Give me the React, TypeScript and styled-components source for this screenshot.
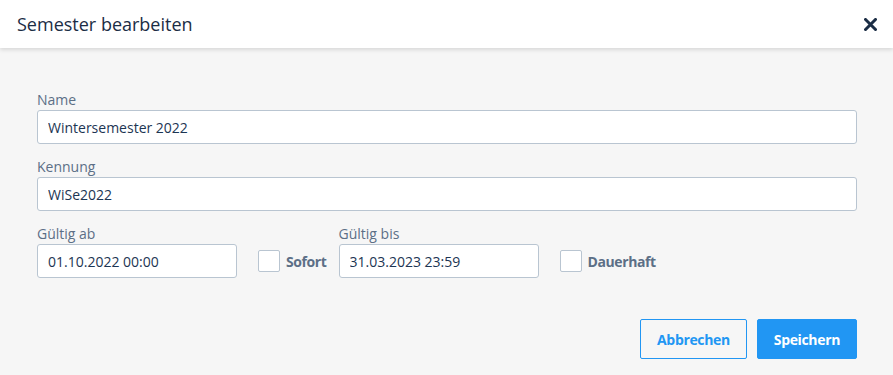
import styled, { createGlobalStyle } from "styled-components";

const GlobalStyle = createGlobalStyle`
  html, body {
    margin: 0;
    padding: 0;
    background: #f6f6f6;
    font-family: "Open Sans", "Noto Sans", sans-serif;
  }
  * { box-sizing: border-box; }
`;

const Modal = styled.div`
  width: 893px;
  height: 375px;
  background: #f6f6f6;
  display: flex;
  flex-direction: column;
`;

const Header = styled.div`
  height: 48px;
  background: #fff;
  display: flex;
  align-items: center;
  justify-content: space-between;
  padding: 0 16px 0 17px;
  box-shadow: 0 2px 4px rgba(0, 0, 0, 0.12);
  position: relative;
  z-index: 1;
`;

const Title = styled.h1`
  margin: 0;
  font-size: 18px;
  font-weight: 400;
  color: #1b2d45;
  line-height: 24px;
`;

const Close = styled.button`
  border: none;
  background: none;
  padding: 0;
  width: 14px;
  height: 14px;
  display: flex;
  align-items: center;
  justify-content: center;
  cursor: pointer;
`;

const Body = styled.div`
  padding: 42px 36px 0 37px;
  display: flex;
  flex-direction: column;
  gap: 13px;
`;

const Field = styled.div<{ width?: number }>`
  display: flex;
  flex-direction: column;
  width: ${p => (p.width ? `${p.width}px` : "auto")};
`;

const Label = styled.label`
  font-size: 14px;
  line-height: 20px;
  color: #5c6f86;
`;

const Input = styled.input`
  height: 34px;
  border: 1px solid #b9c5d1;
  border-radius: 3px;
  background: #fff;
  padding: 0 10px;
  font-family: inherit;
  font-size: 14px;
  color: #1c3553;
  outline: none;
`;

const DateRow = styled.div`
  display: flex;
  align-items: flex-end;
`;

const CheckGroup = styled.label`
  height: 34px;
  display: flex;
  align-items: center;
  margin: 0 12px 0 21px;
  font-size: 14px;
  font-weight: 700;
  letter-spacing: -0.4px;
  color: #5c6f86;
  cursor: pointer;
`;

const Box = styled.span`
  width: 22px;
  height: 22px;
  border: 1px solid #b9c5d1;
  border-radius: 2px;
  background: #fff;
  margin-right: 6px;
`;

const Footer = styled.div`
  display: flex;
  justify-content: flex-end;
  gap: 10px;
  margin-top: 28px;
`;

const Button = styled.button<{ primary?: boolean }>`
  height: 40px;
  padding: 0 16px;
  border-radius: 2px;
  border: 1px solid #2196f3;
  background: ${p => (p.primary ? "#2196f3" : "transparent")};
  color: ${p => (p.primary ? "#fff" : "#2196f3")};
  font-family: inherit;
  font-size: 14px;
  font-weight: 700;
  letter-spacing: -0.35px;
  cursor: pointer;
`;

export default function App() {
  return (
    <>
      <GlobalStyle />
      <Modal>
        <Header>
          <Title>Semester bearbeiten</Title>
          <Close aria-label="Schließen">
            <svg width="13" height="13" viewBox="0 0 13 13">
              <path d="M1.5 1.5 L11.5 11.5 M11.5 1.5 L1.5 11.5" stroke="#1b2d45" strokeWidth="3" strokeLinecap="square" />
            </svg>
          </Close>
        </Header>
        <Body>
          <Field>
            <Label>Name</Label>
            <Input defaultValue="Wintersemester 2022" />
          </Field>
          <Field>
            <Label>Kennung</Label>
            <Input defaultValue="WiSe2022" />
          </Field>
          <DateRow>
            <Field width={200}>
              <Label>Gültig ab</Label>
              <Input defaultValue="01.10.2022 00:00" />
            </Field>
            <CheckGroup>
              <Box />
              Sofort
            </CheckGroup>
            <Field width={200}>
              <Label>Gültig bis</Label>
              <Input defaultValue="31.03.2023 23:59" />
            </Field>
            <CheckGroup>
              <Box />
              Dauerhaft
            </CheckGroup>
          </DateRow>
          <Footer>
            <Button>Abbrechen</Button>
            <Button primary>Speichern</Button>
          </Footer>
        </Body>
      </Modal>
    </>
  );
}
